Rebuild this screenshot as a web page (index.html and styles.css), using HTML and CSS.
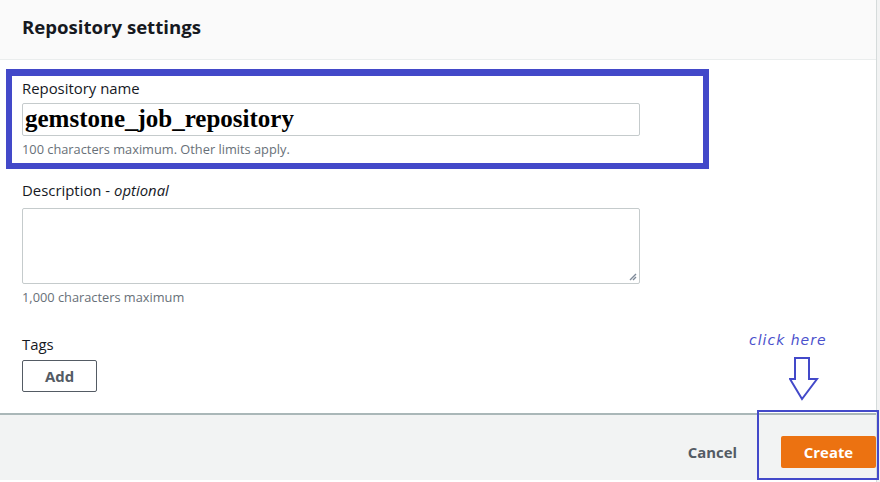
FILE: index.html
```html
<!DOCTYPE html>
<html lang="en">
<head>
<meta charset="utf-8">
<title>Repository settings</title>
<link rel="stylesheet" href="styles.css">
</head>
<body>
<div class="page">
  <div class="panel">
    <div class="panel-header">
      <h2 class="panel-title">Repository settings</h2>
    </div>
    <div class="panel-body">
      <div class="field field-name">
        <label class="field-label">Repository name</label>
        <div class="input">gemstone_job_repository</div>
        <div class="field-hint">100 characters maximum. Other limits apply.</div>
      </div>
      <div class="field field-desc">
        <label class="field-label">Description - <em>optional</em></label>
        <div class="textarea">
          <svg class="resize" width="8" height="8" viewBox="0 0 8 8"><path d="M1 7L7 1M4 7L7 4" stroke="#7d8998" stroke-width="1.4" fill="none"/></svg>
        </div>
        <div class="field-hint">1,000 characters maximum</div>
      </div>
      <div class="field field-tags">
        <label class="field-label">Tags</label>
        <button class="btn btn-normal">Add</button>
      </div>
    </div>
    <div class="panel-footer">
      <button class="btn btn-link">Cancel</button>
      <button class="btn btn-primary">Create</button>
    </div>
  </div>
  <div class="side"></div>

  <div class="annot annot-name"></div>
  <div class="annot annot-create"></div>
  <div class="annot-text">click here</div>
  <svg class="annot-arrow" width="30" height="44" viewBox="0 0 30 44">
    <path d="M6 1H20V22H28L13 42L1 22H6Z" fill="none" stroke="#4349c9" stroke-width="2" stroke-linejoin="miter"/>
  </svg>
</div>
</body>
</html>
```
FILE: styles.css
```css
* { box-sizing: border-box; }
html, body { margin: 0; padding: 0; }
body {
  width: 880px;
  height: 482px;
  overflow: hidden;
  background: #ffffff;
  font-family: "Open Sans", "Noto Sans", sans-serif;
  color: #16191f;
}
.page {
  position: relative;
  display: flex;
  width: 880px;
  height: 482px;
}
.panel {
  width: 877px;
  display: flex;
  flex-direction: column;
  border-right: 1px solid #d5dbdb;
  background: #ffffff;
}
.side {
  flex: 1;
  background: #f2f3f3;
}
.panel-header {
  height: 60px;
  background: #fafafa;
  border-bottom: 1px solid #eaeded;
  padding: 0 22px;
  display: flex;
  align-items: center;
}
.panel-title {
  margin: 0;
  font-size: 18.6px;
  font-weight: 700;
  line-height: 22px;
  color: #16191f;
  padding-bottom: 5px;
}
.panel-body {
  padding: 19px 22px 0 22px;
  height: 353px;
}
.field-label {
  display: block;
  font-size: 14.9px;
  line-height: 18px;
  color: #16191f;
}
.field-label em { font-style: italic; }
.input {
  margin-top: 6px;
  width: 618px;
  height: 33px;
  border: 1px solid #c5cbcc;
  border-radius: 2px;
  padding: 0 2px;
  font-family: "Liberation Serif", serif;
  font-weight: 700;
  font-size: 25px;
  line-height: 30px;
  color: #000000;
}
.field-hint {
  margin-top: 4px;
  font-size: 12.8px;
  line-height: 18px;
  color: #687078;
}
.field-desc { margin-top: 23px; }
.field-desc .field-label { margin-bottom: 9px; }
.textarea {
  position: relative;
  width: 618px;
  height: 76px;
  border: 1px solid #c5cbcc;
  border-radius: 2px;
  display: flex;
  justify-content: flex-end;
  align-items: flex-end;
  padding: 0 2px 2px 0;
}
.resize { display: block; }
.field-desc .field-hint { margin-top: 4px; }
.field-tags { margin-top: 29px; }
.field-tags .field-label { margin-bottom: 7px; }
.btn {
  font-family: "Open Sans", "Noto Sans", sans-serif;
  font-size: 14.9px;
  font-weight: 700;
  cursor: pointer;
}
.btn-normal {
  width: 75px;
  height: 32px;
  border: 1px solid #545b64;
  border-radius: 2px;
  background: #ffffff;
  color: #545b64;
  padding: 0;
}
.panel-footer {
  height: 67px;
  border-top: 2px solid #aab7b8;
  background: #f2f3f3;
  display: flex;
  justify-content: flex-end;
  align-items: flex-start;
  padding-top: 21px;
  gap: 22px;
}
.btn-link {
  height: 32px;
  border: none;
  background: transparent;
  color: #545b64;
  padding: 0 22px;
}
.btn-primary {
  width: 95px;
  height: 32px;
  border: none;
  border-radius: 2px;
  background: #ec7211;
  color: #ffffff;
  padding: 0;
}
.annot {
  position: absolute;
  border-style: solid;
  border-color: #4349c9;
}
.annot-name {
  left: 6px;
  top: 69px;
  width: 703px;
  height: 100px;
  border-width: 7px 6px 6px 6px;
}
.annot-create {
  left: 757px;
  top: 410px;
  width: 122px;
  height: 70px;
  border-width: 2px;
}
.annot-text {
  position: absolute;
  left: 749px;
  top: 331px;
  font-family: "DejaVu Sans", sans-serif;
  font-style: italic;
  font-size: 14px;
  line-height: 18px;
  letter-spacing: 1px;
  color: #4a50cc;
}
.annot-arrow {
  position: absolute;
  left: 789px;
  top: 357px;
}
```
